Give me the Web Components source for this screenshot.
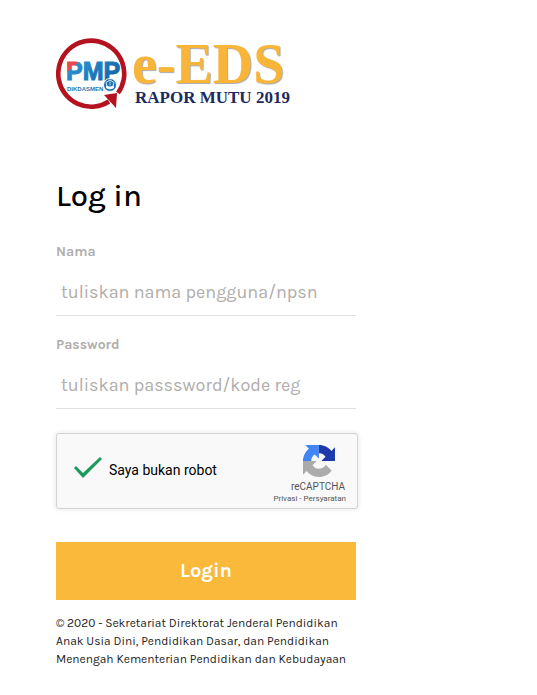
<!DOCTYPE html>
<html lang="id">
<head>
<meta charset="utf-8">
<meta name="viewport" content="width=device-width, initial-scale=1">
<title>e-EDS Rapor Mutu 2019</title>
<style>
	body {
		margin: 0;
		background: #fff;
		color: #000;
		font-family: Karla, Inter, "Liberation Sans", sans-serif;
	}
</style>
</head>
<body>
<login-page></login-page>

<script>
class EdsLogo extends HTMLElement {
	constructor() {
		super();
		this.attachShadow({ mode: "open" });
	}

	connectedCallback() {
		this.shadowRoot.innerHTML = `
		<style>
		:host {
			display: flex;
			gap: 4px;
			font-family: "Liberation Serif", serif;
			font-weight: bold;
			white-space: nowrap;
		}
		svg {
			flex: none;
		}
		.name {
			font-size: 56px;
			line-height: 52px;
			color: #f9b538;
			text-shadow: 1px 1px 1px #aaa;
		}
		.sub {
			padding-left: 3px;
			font-size: 17px;
			line-height: 16px;
			color: #1b2a5e;
		}
		</style>
		<svg width="72" height="72" viewBox="0 0 72 72" role="img" aria-label="PMP Dikdasmen">
			<defs>
				<linearGradient id="letters" gradientUnits="userSpaceOnUse" x1="11" y1="20" x2="53" y2="68">
					<stop offset=".17" stop-color="#e5484d"/>
					<stop offset=".17" stop-color="#2b8fd0"/>
					<stop offset=".8" stop-color="#14609f"/>
				</linearGradient>
			</defs>
			<path d="M53 63.500A33 33 0 1 1 62 55" fill="none" stroke="#b5121f" stroke-width="4.600"/>
			<path d="M48 57L61 55L60 70Z" fill="#b5121f"/>
			<text x="10" y="42" font-family="Liberation Sans" font-weight="bold" font-size="25" fill="url(#letters)" stroke="url(#letters)">PMP</text>
			<text x="11" y="53" font-family="Liberation Sans" font-weight="bold" font-size="6" fill="#2877b2">DIKDASMEN</text>
			<circle cx="54" cy="47" r="6.500" fill="#1b72b2" stroke="#fff"/>
			<path d="M54 42l4 2.500-1.500 5.500h-5l-1.500-5.500z" fill="none" stroke="#d9edf8"/>
			<path d="M50.500 48l3.500 1 3.500-1v2l-3.500 1-3.500-1zM54 43.500v4" fill="#fff" stroke="#fff" stroke-width=".7"/>
		</svg>
		<div>
			<div class="name">e-EDS</div>
			<div class="sub">RAPOR MUTU 2019</div>
		</div>
		`;
	}
}
customElements.define("eds-logo", EdsLogo);

class LoginField extends HTMLElement {
	constructor() {
		super();
		this.attachShadow({ mode: "open" });
	}

	static get observedAttributes() {
		return ["label", "type", "placeholder"];
	}

	attributeChangedCallback() {
		this.render();
	}

	connectedCallback() {
		this.render();
	}

	render() {
		this.shadowRoot.innerHTML = `
		<style>
		:host {
			display: block;
		}
		label {
			display: block;
			font-size: 14px;
			line-height: 20px;
			font-weight: bold;
			color: #b0adab;
		}
		input {
			display: block;
			box-sizing: border-box;
			width: 100%;
			height: 54px;
			padding: 13px 5px 7px;
			border: 0;
			border-bottom: 1px solid #e0e0e0;
			outline: 0;
			background: none;
			color: #333;
			font: inherit;
			font-size: 18px;
		}
		input::placeholder {
			color: #b0adab;
			opacity: 1;
		}
		</style>
		<label for="field">${this.getAttribute("label")}</label>
		<input id="field" type="${this.getAttribute("type") || "text"}" placeholder="${this.getAttribute("placeholder") || ""}">
		`;
	}
}
customElements.define("login-field", LoginField);

class RobotCheck extends HTMLElement {
	constructor() {
		super();
		this.attachShadow({ mode: "open" });
	}

	connectedCallback() {
		this.shadowRoot.innerHTML = `
		<style>
		:host {
			display: flex;
			box-sizing: border-box;
			align-items: center;
			justify-content: space-between;
			min-height: 76px;
			padding: 10px 11px 3px 17px;
			border: 1px solid #d3d3d3;
			border-radius: 3px;
			background: #f9f9f9;
			box-shadow: 0 0 4px 1px rgba(0, 0, 0, .08);
			font-family: Roboto, sans-serif;
		}
		label {
			display: flex;
			align-items: center;
			gap: 7px;
			padding-bottom: 9px;
			font-size: 14px;
			line-height: 20px;
		}
		input {
			appearance: none;
			box-sizing: border-box;
			width: 28px;
			height: 28px;
			margin: 0;
			border: 2px solid #c1c1c1;
			border-radius: 2px;
			background: #fff;
		}
		input:checked {
			border: 0;
			border-radius: 0;
			background: #1a9b5c;
			clip-path: polygon(0 12px, 2px 10px, 9px 17px, 26px 1px, 28px 3px, 9px 22px);
		}
		.brand {
			display: flex;
			flex-direction: column;
			align-items: flex-end;
			color: #555;
		}
		svg {
			margin-right: 11px;
		}
		.title {
			margin-top: 4px;
			padding-right: 1px;
			font-size: 10px;
			line-height: 12px;
		}
		.links {
			font-size: 8px;
			line-height: 12px;
		}
		a {
			color: inherit;
			text-decoration: none;
		}
		</style>
		<label><input type="checkbox" checked><span>Saya bukan robot</span></label>
		<div class="brand">
			<svg width="32" height="32" viewBox="0 0 64 64" aria-hidden="true">
				<path fill="#1c3aa9" d="M64 31.955l-.033-1.370V4.687l-7.160 7.160C50.948 4.674 42.033.093 32.050.093V17c.485-.600.860-.500 1.135-.500 4.976.393 9.288 3.139 11.828 7.124l-8.307 8.307L64 31.953"/>
				<path fill="#4285f4" d="M31.862.094l-1.370.033H4.594l7.160 7.160C4.580 13.147 0 22.060 0 32.046h16.260c0-.485.057-.860.163-1.135.393-4.976 3.139-9.288 7.124-11.828l8.307 8.307L31.860.095"/>
				<path fill="#ababab" d="M.001 32.045l.033 1.370v25.898l7.160-7.160c5.860 7.173 14.774 11.754 24.760 11.754 10.388 0 19.622-4.960 25.458-12.640l-11.736-11.860a15.550 15.550 0 0 1-4.754 5.334c-2.050 1.600-4.952 2.906-8.968 2.906-.485 0-.860-.057-1.135-.163-4.976-.393-9.288-3.139-11.828-7.124l8.307-8.307L0 32.047"/>
			</svg>
			<div class="title">reCAPTCHA</div>
			<div class="links"><a href="#privasi">Privasi</a> - <a href="#persyaratan">Persyaratan</a></div>
		</div>
		`;
	}
}
customElements.define("robot-check", RobotCheck);

class LoginButton extends HTMLElement {
	constructor() {
		super();
		this.attachShadow({ mode: "open" });
	}

	connectedCallback() {
		this.shadowRoot.innerHTML = `
		<style>
		:host {
			display: block;
		}
		button {
			display: block;
			width: 100%;
			padding: 17px;
			border: 0;
			background: #fbb93c;
			color: #fff;
			font: inherit;
			font-size: 20px;
			line-height: 24px;
			font-weight: bold;
			cursor: pointer;
		}
		</style>
		<button type="button"><slot></slot></button>
		`;
	}
}
customElements.define("login-button", LoginButton);

class LoginPage extends HTMLElement {
	constructor() {
		super();
		this.attachShadow({ mode: "open" });
	}

	connectedCallback() {
		this.shadowRoot.innerHTML = `
		<style>
		:host {
			display: block;
			padding: 38px 56px 24px;
		}
		main {
			max-width: 300px;
		}
		h1 {
			margin: 66px 0 26px;
			font-size: 31px;
			line-height: 40px;
			font-weight: 500;
		}
		login-field {
			margin-bottom: 19px;
		}
		robot-check {
			margin: 24px -2px 33px 0;
		}
		p {
			margin: 14px 0 0;
			font-size: 12px;
			line-height: 18px;
			color: #222;
		}
		</style>
		<main>
			<eds-logo></eds-logo>
			<h1>Log in</h1>
			<login-field label="Nama" placeholder="tuliskan nama pengguna/npsn"></login-field>
			<login-field label="Password" type="password" placeholder="tuliskan passsword/kode reg"></login-field>
			<robot-check></robot-check>
			<login-button>Login</login-button>
			<p>© 2020 - Sekretariat Direktorat Jenderal Pendidikan Anak Usia Dini, Pendidikan Dasar, dan Pendidikan Menengah Kementerian Pendidikan dan Kebudayaan</p>
		</main>
		`;
	}
}
customElements.define("login-page", LoginPage);
</script>
</body>
</html>
